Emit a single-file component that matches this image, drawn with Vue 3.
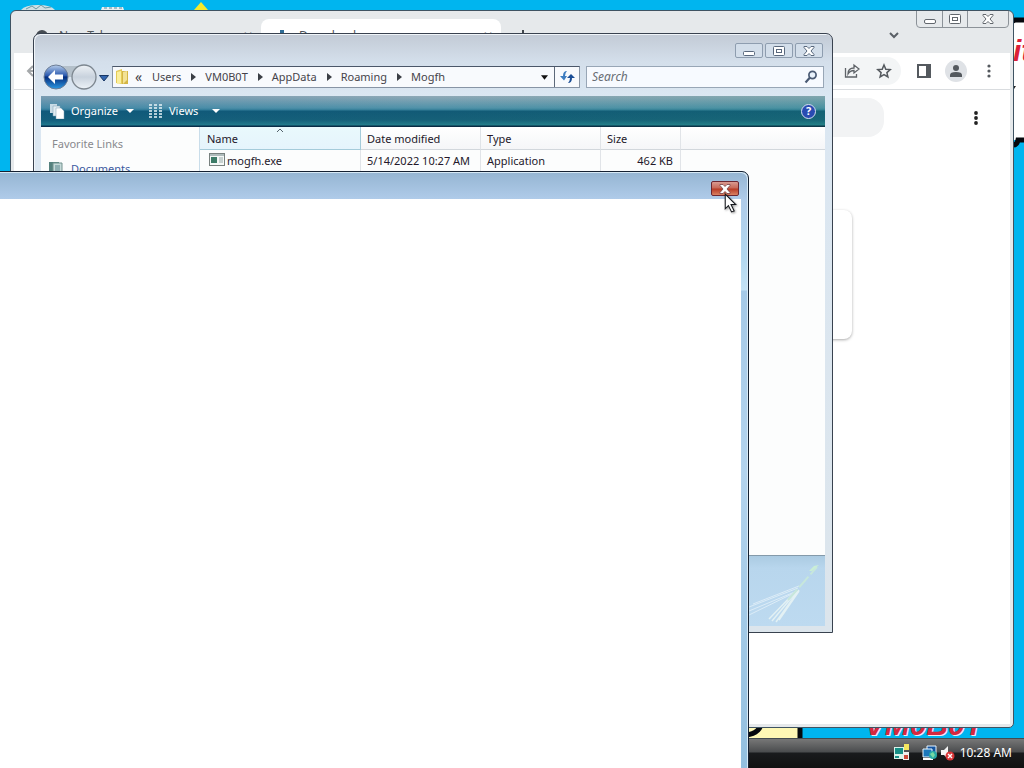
<script setup>
import { ref } from 'vue'

const query = ref('')
const crumbs = ['Users', 'VM0B0T', 'AppData', 'Roaming', 'Mogfh']
const files = [
  { name: 'mogfh.exe', date: '5/14/2022 10:27 AM', type: 'Application', size: '462 KB' }
]
</script>

<template>
  <div class="desktop">
    <svg class="shortcuts" viewBox="0 0 230 12" aria-hidden="true">
      <path d="M21 10q4-5 17-5t17 5z" fill="#cfe0e4" />
      <path d="M26 9l6-3 4 3 5-4 4 3 6-1" fill="none" stroke="#6a9aa5" />
      <path d="M101 10l1-3h21l1 3z" fill="#e8eff2" />
      <path d="M104 8h18" stroke="#5b8b9c" stroke-dasharray="3 2" />
      <path d="M194 10l7-8 7 8z" fill="#f4ea2c" />
    </svg>
    <svg class="note" viewBox="0 0 12 134" aria-hidden="true">
      <path d="M0 5h12v120H0z" fill="#fff" />
      <path d="M0 6l2-1h10M12 125H5q-1 5-5 5" fill="none" stroke="#05080d" stroke-width="5" />
      <path d="M0 71h3l-2 3z" fill="#222" />
    </svg>
    <span class="note-text">it</span>
    <svg class="figure" viewBox="0 0 60 20" aria-hidden="true">
      <path d="M0 0h56v20H0z" fill="#fff8b5" />
      <path d="M54 0v20M15 0q0 11-15 13" fill="none" stroke="#05080d" stroke-width="5" />
    </svg>
    <span class="signature">VM0B0T</span>

    <section class="browser" aria-label="Browser">
      <div class="tabs">
        <div class="tab">
          <svg class="tab-icon" viewBox="0 0 14 14" aria-hidden="true"><circle cx="7" cy="7" r="6" fill="#454b52" /><circle cx="7" cy="7" r="3" fill="#fff" /></svg>
          <span class="tab-title">New Tab</span><span class="tab-x">✕</span>
        </div>
        <div class="tab active">
          <svg class="tab-icon" viewBox="0 0 14 14" aria-hidden="true"><path d="M5 1h4v5h4l-6 6-6-6h4z" fill="#2e6c96" /></svg>
          <span class="tab-title">Downloads</span><span class="tab-x">✕</span>
        </div>
        <svg class="plus" viewBox="0 0 12 12" aria-hidden="true"><path d="M6 0v12M0 6h12" stroke="#40464c" stroke-width="2" /></svg>
      </div>
      <svg class="chevron" viewBox="0 0 12 8" aria-hidden="true"><path d="M2 1l4 4 4-4" fill="none" stroke="#5a6066" stroke-width="2" /></svg>
      <div class="browser-caption">
        <button type="button" aria-label="Minimize browser"><svg viewBox="0 0 12 10"><rect x=".5" y="5.500" width="11" height="4" rx="1.500" fill="#fff" stroke="#62676d" /></svg></button>
        <button type="button" aria-label="Maximize browser"><svg viewBox="0 0 12 10"><rect x=".5" y=".5" width="11" height="9" rx="1" fill="#fff" stroke="#62676d" /><rect x="3.500" y="3.500" width="5" height="3" fill="#fff" stroke="#62676d" /></svg></button>
        <button type="button" class="wide" aria-label="Close browser"><svg viewBox="0 0 12 10"><path d="M1 .5h3l2 2 2-2h3v1L8 5l3 3.500v1H8l-2-2-2 2H1v-1L4 5 1 1.500z" fill="#fff" stroke="#62676d" /></svg></button>
      </div>
      <div class="browser-bar">
        <svg class="back" viewBox="0 0 14 14" aria-hidden="true"><path d="M13 7H2M7 2L2 7l5 5" fill="none" stroke="#a5a8aa" stroke-width="2" /></svg>
        <div class="omni">
          <button type="button" aria-label="Share"><svg viewBox="0 0 16 16"><path d="M1.500 5v9h11v-3M4 11q0-6 6-6V2l5 4-5 4V7.500Q6 7.500 4 11z" fill="none" stroke="#5f6368" stroke-width="1.300" /></svg></button>
          <button type="button" aria-label="Bookmark"><svg viewBox="0 0 16 16"><path d="M8 2l1.800 4.200 4.500.4-3.400 3 1 4.400L8 11.600 4.100 14l1-4.400-3.400-3 4.500-.4z" fill="none" stroke="#54595e" stroke-width="1.500" /></svg></button>
        </div>
        <button type="button" aria-label="Side panel"><svg viewBox="0 0 16 16"><path d="M1 1h14v14H1zM3 3v10h7V3z" fill="#54595e" fill-rule="evenodd" /></svg></button>
        <button type="button" class="avatar" aria-label="Profile"><svg viewBox="0 0 16 16"><circle cx="8" cy="5" r="3" fill="#54595e" /><path d="M2 14v-2q0-3 6-3t6 3v2z" fill="#54595e" /></svg></button>
        <button type="button" aria-label="Browser menu"><svg viewBox="0 0 16 16" fill="#54595e"><circle cx="8" cy="3" r="1.600" /><circle cx="8" cy="8" r="1.600" /><circle cx="8" cy="13" r="1.600" /></svg></button>
      </div>
      <div class="page">
        <div class="page-search"></div>
        <button type="button" class="page-menu" aria-label="More actions"><svg viewBox="0 0 16 16" fill="#222"><circle cx="8" cy="3" r="1.900" /><circle cx="8" cy="8" r="1.900" /><circle cx="8" cy="13" r="1.900" /></svg></button>
        <div class="page-card"></div>
      </div>
    </section>

    <section class="explorer" aria-label="Mogfh">
      <div class="caption">
        <button type="button" aria-label="Minimize"><svg viewBox="0 0 12 10"><rect x=".5" y="5.500" width="11" height="4" rx="1" fill="#fff" stroke="#59687d" /></svg></button>
        <button type="button" aria-label="Maximize"><svg viewBox="0 0 12 10"><rect x=".5" y=".5" width="11" height="9" rx="1" fill="#fff" stroke="#59687d" /><rect x="3.500" y="3.500" width="5" height="3" fill="#fff" stroke="#59687d" /></svg></button>
        <button type="button" aria-label="Close"><svg viewBox="0 0 12 10"><path d="M1 .5h3l2 2 2-2h3v1L8 5l3 3.500v1H8l-2-2-2 2H1v-1L4 5 1 1.500z" fill="#fff" stroke="#59687d" /></svg></button>
      </div>
      <div class="nav">
        <svg class="travel" viewBox="0 0 68 26" role="img" aria-label="Back and forward">
          <defs>
            <linearGradient id="orb" x1="0" y1="0" x2="0" y2="1"><stop offset="0" stop-color="#b7cdea" /><stop offset=".45" stop-color="#2857ad" /><stop offset=".5" stop-color="#052c7c" /><stop offset="1" stop-color="#2c9ae4" /></linearGradient>
            <linearGradient id="pale" x1="0" y1="0" x2="0" y2="1"><stop offset="0" stop-color="#eef2f6" /><stop offset=".5" stop-color="#c8d2dd" /><stop offset="1" stop-color="#edf3f8" /></linearGradient>
          </defs>
          <path d="M15 2h29v4q-8 0-12 7h-7z" fill="#b4c0ca" />
          <circle cx="15" cy="13" r="12" fill="url(#orb)" stroke="#6c7d96" />
          <path d="M7 13l7-7v4.500h8v5h-8V20z" fill="#fff" />
          <circle cx="43" cy="13" r="12" fill="url(#pale)" stroke="#7d8790" stroke-width="1.300" />
          <path d="M58.500 11.500h9L63 17z" fill="#3266b0" stroke="#183765" />
        </svg>
        <div class="address">
          <svg class="folder" viewBox="0 0 16 18" aria-hidden="true"><path d="M1 3l6-2v15l-6-1z" fill="#e4cb58" /><path d="M2 4l4-1v12l-4 1z" fill="#fbef9d" /><path d="M7 3h6v13H7z" fill="#d4b646" /><path d="M8 4l4-1v9l-4 4z" fill="#f2e295" /></svg>
          <span class="more">«</span>
          <template v-for="(crumb, i) in crumbs" :key="crumb">
            <svg v-if="i" class="step" viewBox="0 0 5 8" aria-hidden="true"><path d="M0 0l5 4-5 4z" fill="#3b3f45" /></svg>
            <a href="#">{{ crumb }}</a>
          </template>
          <button type="button" class="history" aria-label="Previous locations"><svg viewBox="0 0 8 5"><path d="M0 0h8L4 5z" fill="#111" /></svg></button>
          <button type="button" class="refresh" aria-label="Refresh"><svg viewBox="0 0 16 14"><path d="M8 1Q4 1 4 6H1l4 4.500L8 6H6q0-3 2-5z" fill="#3d7cc0" /><path d="M9 13q4 0 4-5h3l-4-4-4 4h3q0 3-2 5z" fill="#1b4e96" /></svg></button>
        </div>
        <label class="search">
          <input v-model="query" type="text" placeholder="Search" aria-label="Search">
          <svg viewBox="0 0 14 14" aria-hidden="true"><circle cx="8.500" cy="5" r="3.600" fill="#e9f2fc" stroke="#4a5a74" stroke-width="1.700" /><path d="M6 7.500L1.500 12.500" stroke="#4a5a74" stroke-width="2.200" /></svg>
        </label>
      </div>
      <div class="commands">
        <button type="button" class="organize"><svg class="cmd-icon" viewBox="0 0 16 16" aria-hidden="true"><path d="M1 1h7v9H1z" fill="#c9dce6" /><path d="M4 3h7v10H4z" fill="#e1edf2" stroke="#7e9fb1" stroke-width=".5" /><path d="M7 5h5l3 3v8H7z" fill="#fff" stroke="#7e9fb1" stroke-width=".5" /></svg>Organize<svg class="arrow" viewBox="0 0 8 4" aria-hidden="true"><path d="M0 0h8L4 4z" fill="#fff" /></svg></button>
        <button type="button" class="views"><svg class="cmd-icon" viewBox="0 0 16 16" aria-hidden="true"><path d="M0 2h3M5 2h3M10 2h3M0 5h3M5 5h3M10 5h3M0 8h3M5 8h3M10 8h3M0 11h3M5 11h3M10 11h3M0 14h3M5 14h3M10 14h3" stroke="#e9f3f7" stroke-width="1.600" /></svg>Views<svg class="arrow" viewBox="0 0 8 4" aria-hidden="true"><path d="M0 0h8L4 4z" fill="#fff" /></svg></button>
        <button type="button" class="help" aria-label="Help">?</button>
      </div>
      <div class="body">
        <nav class="links">
          <h2>Favorite Links</h2>
          <a href="#"><svg viewBox="0 0 16 16" aria-hidden="true"><path d="M0 1h10v14H0z" fill="#55817e" /><path d="M4 2h9v13H4z" fill="#c5dad9" stroke="#73928f" /><path d="M6 5h5M6 7h5M6 9h5" stroke="#58848c" /></svg>Documents</a>
        </nav>
        <div class="list">
          <table>
            <thead><tr><th class="sorted">Name<svg viewBox="0 0 6 4" aria-hidden="true"><path d="M0 4l3-3 3 3" fill="none" stroke="#54616b" /></svg></th><th>Date modified</th><th>Type</th><th class="size-head">Size</th><th class="rest"></th></tr></thead>
            <tbody>
              <tr v-for="file in files" :key="file.name">
                <td class="file"><svg viewBox="0 0 16 13" aria-hidden="true"><rect x=".5" y=".5" width="15" height="12" fill="#f5f8f7" stroke="#78817f" /><path d="M1 2h14" stroke="#afbcbc" stroke-width="2" /><path d="M2 4h6v6H2z" fill="#3c7b67" /><path d="M10 5h4M10 7h4M10 9h4" stroke="#99aaa8" /></svg>{{ file.name }}</td>
                <td>{{ file.date }}</td><td>{{ file.type }}</td><td class="size">{{ file.size }}</td><td class="rest"></td>
              </tr>
            </tbody>
          </table>
        </div>
      </div>
      <div class="details">
        <svg viewBox="0 0 76 70" aria-hidden="true">
          <path d="M0 51L49 32M0 55L48 35M0 59L47 36M4 48L50 30" stroke="#dcecf7" fill="none" />
          <path d="M20 63L47 35M23 65L48 35M27 66L50 34M30 64L50 35" stroke="#e3f1f4" fill="none" stroke-width="1.500" />
          <path d="M39 44L68 11" stroke="#c7e7dc" stroke-width="2" stroke-dasharray="14 3" />
          <path d="M60 15l5-5 5-1-7 6z" fill="#caeed5" />
        </svg>
      </div>
    </section>

    <footer class="taskbar">
      <svg class="tray" viewBox="0 0 62 20" aria-hidden="true">
        <path d="M1 4h10v12H1z" fill="#d8f3ea" /><path d="M2 5h8v6H2z" fill="#168f86" /><path d="M2 13h4v2H2z" fill="#168f86" /><path d="M11 1h5v6h-5z" fill="#f5e65e" /><path d="M10 9h6v8h-6z" fill="#eee" /><path d="M11 12h4v4h-4z" fill="#cc4839" />
        <path d="M34 3h9v8h-9z" fill="#1454a0" stroke="#e9f5ff" /><path d="M30 6h9v8h-9z" fill="#1d78bb" stroke="#e9f5ff" /><path d="M30 16h10" stroke="#fff" stroke-width="2" /><circle cx="40" cy="12" r="4" fill="#27a7a4" /><path d="M37 11l3-2 2 3-2 3z" fill="#76d8a3" />
        <path d="M48 7h3l4-4v13l-4-4h-3z" fill="#f4f4f4" /><circle cx="57" cy="13" r="4.500" fill="#d93537" /><path d="M55 11l4 4M59 11l-4 4" stroke="#fff" stroke-width="1.400" />
      </svg>
      <time>10:28 AM</time>
    </footer>

    <section class="front" aria-label="Window">
      <div class="front-title">
        <button type="button" aria-label="Close window"><svg viewBox="0 0 12 10"><path d="M1 .5h3l2 2 2-2h3v1L8 5l3 3.500v1H8l-2-2-2 2H1v-1L4 5 1 1.500z" fill="#fff" stroke="#74424a" stroke-width=".8" /></svg></button>
      </div>
      <div class="front-body"></div>
    </section>
    <svg class="cursor" viewBox="0 0 12 19" aria-hidden="true"><path d="M1 1v14l3-3 3 6 2.500-1-3-6H11z" fill="#fff" stroke="#15171c" /></svg>
  </div>
</template>

<style>
html, body { margin: 0; overflow: hidden; }
</style>

<style scoped>
.desktop { position: relative; height: 100vh; overflow: hidden; background: #00b5ef; color: #24182a; font: 12px/16px "Noto Sans", "Open Sans", sans-serif; }
.desktop * { box-sizing: border-box; }
button { display: flex; align-items: center; justify-content: center; margin: 0; padding: 0; border: 0; background: none; color: inherit; font: inherit; }
svg { display: block; flex: none; }
a { color: inherit; text-decoration: none; }

.shortcuts { position: absolute; left: 0; top: 0; width: 230px; }
.note { position: absolute; right: -1px; top: 15px; width: 12px; height: 134px; }
.note-text { position: absolute; left: calc(100% - 11px); top: 34px; color: #dc2037; font: italic bold 30px/34px "Liberation Sans", sans-serif; }
.figure { position: absolute; left: 746px; bottom: 26px; width: 60px; height: 20px; }
.signature { position: absolute; right: 41px; bottom: 26px; color: #d6283f; font: italic bold 30px/34px "Liberation Sans", sans-serif; text-shadow: 1px 1px #f6e8f0; }

.browser { position: absolute; left: 10px; right: 10px; top: 10px; bottom: 40px; display: flex; flex-direction: column; border: 1px solid #3f5362; border-radius: 6px 6px 5px 5px; background: #e6e9eb; overflow: hidden; padding: 0 3px 3px; }
.tabs { display: flex; align-items: flex-end; height: 42px; padding-left: 7px; flex: none; color: #50555b; }
.tab { display: flex; align-items: center; width: 240px; height: 34px; padding: 0 8px 0 14px; border-radius: 8px 8px 0 0; }
.tab.active { background: #fff; }
.tab-icon { width: 14px; height: 14px; margin-right: 10px; }
.tab-title { flex: 1; }
.plus { width: 12px; height: 12px; margin: 0 16px 11px; }
.chevron { position: absolute; right: 113px; top: 21px; width: 12px; height: 8px; }
.browser-caption { position: absolute; right: 4px; top: -1px; display: flex; height: 18px; border: 1px solid #8c9298; border-radius: 0 0 4px 4px; }
.browser-caption button { width: 25px; }
.browser-caption button + button { border-left: 1px solid #8c9298; }
.browser-caption .wide { width: 41px; }
.browser-caption svg { width: 12px; height: 10px; }
.browser-bar { display: flex; align-items: center; flex: none; height: 37px; padding: 0 13px 0 12px; background: #fff; border-bottom: 1px solid #d9dcdf; }
.browser-bar svg { width: 16px; height: 16px; }
.browser-bar .back { width: 14px; height: 14px; }
.omni { display: flex; justify-content: flex-end; align-items: center; gap: 16px; flex: 1; height: 28px; margin: 0 15px 0 40px; padding-right: 9px; border-radius: 14px; background: #f3f5f6; }
.avatar { width: 22px; height: 22px; margin: 0 14px 0 13px; border-radius: 50%; background: #dfe2e6; }
.page { display: flex; flex-wrap: wrap; align-content: flex-start; flex: 1; padding: 8px 26px; background: #fff; }
.page-search { height: 39px; width: 680px; margin-left: auto; margin-right: 84px; border-radius: 16px; background: #f2f3f4; }
.page-menu svg { width: 16px; height: 16px; }
.page-card { width: 680px; height: 129px; margin: 73px 132px 0 auto; border-radius: 8px; background: #fff; box-shadow: 0 1px 3px #aaa; }

.explorer { position: absolute; left: 33px; top: 33px; display: flex; flex-direction: column; width: 800px; height: 600px; padding: 0 7px 6px; border: 1px solid #39424f; border-radius: 7px 7px 0 0; background: linear-gradient(#c2cad5, #d4dfeb 28px, #dbe7f2 62px, #dce5ec); box-shadow: inset 1px 1px #f0f5f9; font-size: 11px; }
.caption { display: flex; justify-content: flex-end; gap: 2px; flex: none; height: 30px; padding: 9px 2px 0; }
.caption button { width: 28px; height: 15px; border: 1px solid #8e9daf; border-radius: 2px; background: #d3deea; }
.caption svg { width: 12px; height: 10px; }
.nav { display: flex; align-items: center; flex: none; height: 26px; padding: 0 1px 0 0; }
.travel { width: 68px; height: 26px; margin-right: 3px; }
.address { display: flex; align-items: center; flex: 1; height: 22px; padding-left: 2px; border: 1px solid #8794a5; border-top-color: #4b5769; background: #f8fafd; color: #45434a; }
.folder { width: 16px; height: 18px; margin-right: 4px; }
.more { width: 17px; font-size: 14px; }
.step { width: 5px; height: 8px; margin: 0 9px 0 10px; }
.history { width: 20px; height: 20px; margin-left: auto; }
.history svg { width: 7px; height: 5px; }
.refresh { width: 25px; height: 20px; border-left: 1px solid #5d697a; }
.refresh svg { width: 16px; height: 14px; }
.search { display: flex; align-items: center; width: 238px; height: 22px; margin-left: 6px; padding: 0 5px; border: 1px solid #98a6b6; background: #f7faff; }
.search input { flex: 1; min-width: 0; padding: 0; border: 0; outline: 0; background: none; color: #555; font: italic 12px/16px "Noto Sans", sans-serif; }
.search input::placeholder { color: #686d74; opacity: 1; }
.search svg { width: 14px; height: 14px; }
.commands { display: flex; align-items: center; flex: none; height: 31px; margin-top: 6px; padding: 0 9px 1px 8px; color: #fff; background: linear-gradient(90deg, #0054a022, #0070a000 50%, #20907022), linear-gradient(#8fa9b7, #5092a9 12px, #347e98 14px, #125a76 15px, #166078 24px, #247e8b 29px, #082a43 30px); }
.cmd-icon { width: 16px; height: 16px; }
.arrow { width: 8px; height: 4px; }
.organize .cmd-icon { margin-right: 6px; }
.organize .arrow { margin-left: 8px; }
.views { margin-left: 15px; }
.views .cmd-icon { margin-right: 4px; }
.views .arrow { margin-left: 14px; }
.commands .help { width: 15px; height: 15px; margin-left: auto; border: 1px solid #d7dff2; border-radius: 50%; background: #294bb2; font-weight: bold; }
.body { display: flex; flex: 1; min-height: 0; background: #fcfdfd; }
.links { width: 159px; padding: 9px 8px 0; border-right: 1px solid #c9ddea; color: #3d5ba1; }
.links h2 { margin: 0 0 9px 3px; color: #88898d; font: 11px/16px "Noto Sans", sans-serif; }
.links a { display: flex; align-items: center; gap: 6px; }
.links svg { width: 16px; height: 16px; }
.list { flex: 1; }
table { width: 100%; table-layout: fixed; border-collapse: separate; border-spacing: 0; }
th, td { height: 22px; padding: 0 0 0 6px; border-right: 1px solid #e1e4e8; font-weight: 400; text-align: left; white-space: nowrap; }
th { height: 23px; width: 120px; padding-top: 2px; border-bottom: 1px solid #d2d7dc; background: linear-gradient(#fff, #f5f6f8); }
th.sorted { position: relative; width: 161px; padding-left: 7px; border-color: #a4cbda; background: linear-gradient(#e9f9fc, #e5f4fc); }
.sorted svg { position: absolute; left: calc(50% - 3px); top: 1px; width: 6px; height: 4px; }
th.size-head { width: 80px; }
th.rest { width: auto; }
.rest { border-right: 0; }
.file svg { display: inline-block; width: 16px; height: 13px; margin: 0 2px 0 3px; vertical-align: -1px; }
td.size { padding-right: 7px; text-align: right; }
.details { display: flex; justify-content: flex-end; flex: none; height: 71px; border-top: 1px solid #849aaa; background: linear-gradient(#abcbe2, #b8d6ed 12px, #bddaf0); }
.details svg { width: 76px; height: 70px; }

.taskbar { position: absolute; inset: auto 0 0; display: flex; align-items: center; justify-content: flex-end; gap: 5px; height: 30px; padding: 0 12px 2px 0; border-top: 1px solid #434b50; background: linear-gradient(#777, #4a4c4e 13px, #191b1d 14px, #111); color: #fff; }
.tray { width: 62px; height: 20px; }

.front { position: absolute; left: -1px; top: 171px; bottom: -8px; display: flex; flex-direction: column; width: 750px; padding-right: 7px; border: 1px solid #152132; border-radius: 0 7px 0 0; background: linear-gradient(#95b5d2, #afcbe9 27px, #b3d8f0 85px, #c4e2f5 118px, #a5c9e7 119px, #b4d4ee 300px, #92bfdf); box-shadow: inset -1px 1px #d7e9f5; }
.front-title { display: flex; justify-content: flex-end; flex: none; height: 27px; padding: 9px 2px 0; }
.front-title button { width: 28px; height: 15px; border: 1px solid #6c2731; border-radius: 2px; background: linear-gradient(#d99b91, #c76857 6px, #b73b25 7px, #d98162); }
.front-title svg { width: 12px; height: 10px; }
.front-body { flex: 1; background: #fff; }
.cursor { position: absolute; left: 724px; top: 193px; width: 13px; height: 20px; filter: drop-shadow(1px 1px 1px #0006); }
</style>
